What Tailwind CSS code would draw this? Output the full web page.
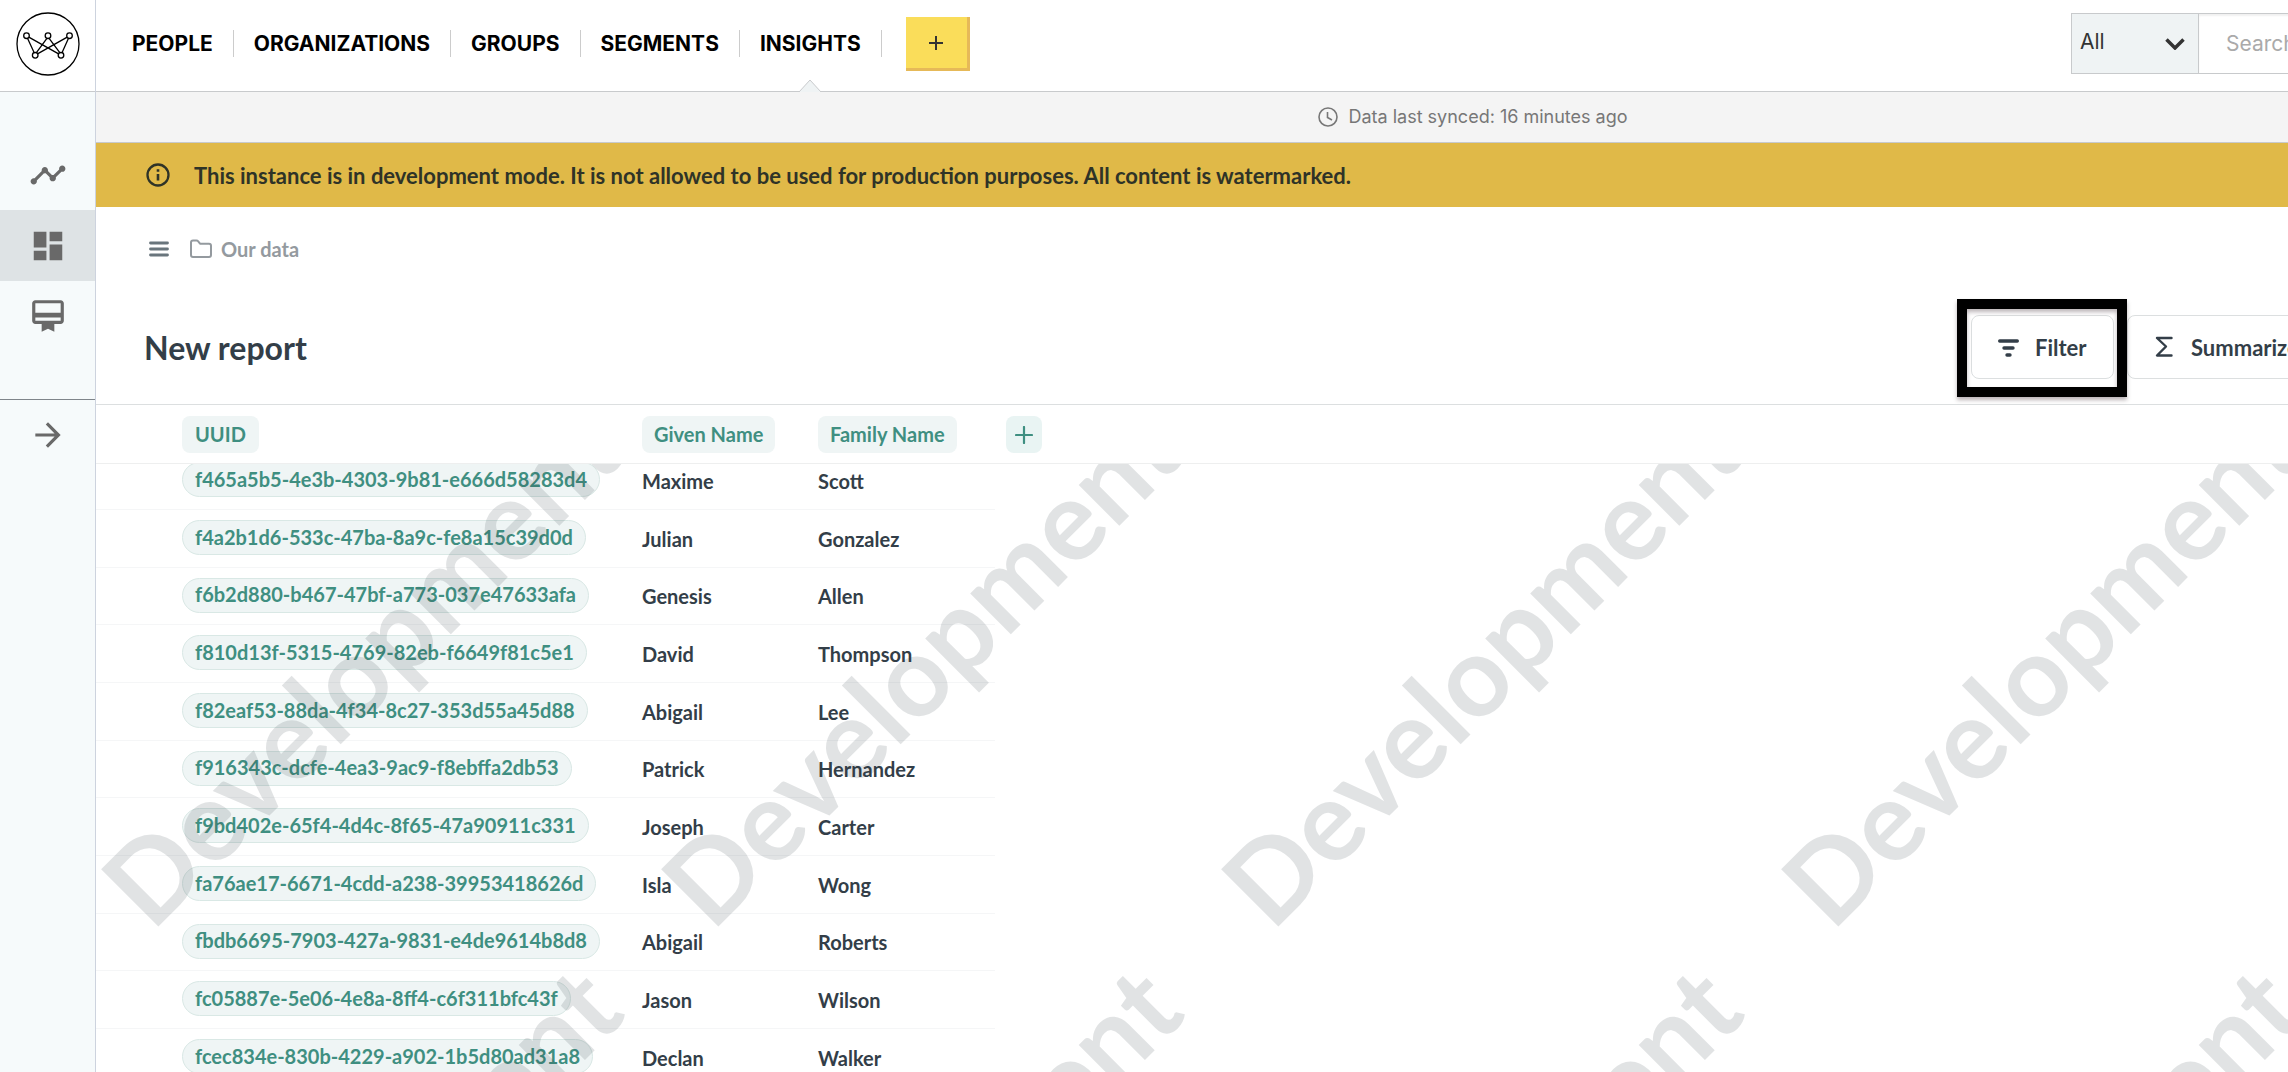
<!DOCTYPE html>
<html lang="en">
<head>
    <meta charset="UTF-8">
    <meta name="viewport" content="width=device-width, initial-scale=1.0">
    <title>New report - Insights</title>
    <script src="https://cdn.jsdelivr.net/npm/@tailwindcss/browser@4"></script>
</head>
<body class="flex h-screen overflow-hidden bg-white font-['Lato',sans-serif] text-[#333e48]">
    <!-- Sidebar -->
    <aside class="flex w-24 shrink-0 flex-col border-r border-[#cdd3de] bg-[#f6fafb] text-[#696969]">
        <a href="#" aria-label="Home" class="flex h-[92px] items-start justify-center border-b border-[#c8cacc] bg-white pt-3 text-black">
            <svg class="h-16 w-16" viewBox="0 0 64 64" fill="none" stroke="currentColor" stroke-width="1.3">
                <circle cx="32" cy="32" r="31"/>
                <path d="M11.5 26.3L18.2 40.8M12.8 25.1L42.6 41.9M30.9 26.3L20.4 40.7M33.1 26.3L43.8 40.7M52.5 26.3L46 40.8M51.2 25.1L21.5 41.9"/>
                <g fill="white">
                    <circle cx="10.5" cy="23.7" r="2.8"/>
                    <circle cx="32" cy="23.7" r="2.8"/>
                    <circle cx="53.5" cy="23.7" r="2.8"/>
                    <circle cx="19.2" cy="43.3" r="2.8"/>
                    <circle cx="45" cy="43.3" r="2.8"/>
                </g>
            </svg>
        </a>
        <nav class="flex flex-col border-b border-[#7f858a] pt-12 pb-12">
            <a href="#" aria-label="Activity" class="flex h-[70px] items-center justify-center">
                <svg class="h-[38px] w-[38px]" viewBox="0 0 24 24" fill="currentColor"><path d="M23 8c0 1.100-.9 2-2 2-.18 0-.35-.02-.51-.07l-3.560 3.550c.05.16.07.34.07.52 0 1.100-.9 2-2 2s-2-.9-2-2c0-.18.02-.36.07-.52l-2.550-2.550c-.16.05-.34.07-.52.07s-.36-.02-.52-.07l-4.550 4.560c.05.16.07.33.07.51 0 1.100-.9 2-2 2s-2-.9-2-2 .9-2 2-2c.18 0 .35.02.51.07l4.560-4.550C8.020 9.360 8 9.180 8 9c0-1.100.9-2 2-2s2 .9 2 2c0 .18-.02.36-.07.52l2.550 2.550c.16-.05.34-.07.52-.07s.36.02.52.07l3.550-3.560C19.020 8.350 19 8.180 19 8c0-1.100.9-2 2-2s2 .9 2 2z"/></svg>
            </a>
            <a href="#" aria-label="Dashboards" class="flex h-[71px] items-center justify-center bg-[#dee3e5]">
                <svg class="h-[38px] w-[38px]" viewBox="0 0 24 24" fill="currentColor"><path d="M3 13h8V3H3v10zm0 8h8v-6H3v6zm10 0h8V11h-8v10zm0-18v6h8V3h-8z"/></svg>
            </a>
            <a href="#" aria-label="Memberships" class="flex h-[70px] items-center justify-center">
                <svg class="h-[38px] w-[38px]" viewBox="0 0 24 24" fill="currentColor"><path d="M20 2H4c-1.110 0-2 .89-2 2v11c0 1.110.89 2 2 2h4v5l4-2 4 2v-5h4c1.110 0 2-.89 2-2V4c0-1.110-.89-2-2-2zm0 13H4v-2h16v2zm0-5H4V4h16v6z"/></svg>
            </a>
        </nav>
        <button type="button" aria-label="Expand menu" class="flex h-[70px] items-center justify-center">
            <svg class="h-[38px] w-[38px]" viewBox="0 0 24 24" fill="currentColor"><path d="M12 4l-1.410 1.410L16.170 11H4v2h12.170l-5.580 5.590L12 20l8-8z"/></svg>
        </button>
    </aside>

    <div class="min-w-0 flex-1 overflow-hidden">
        <div class="flex h-full w-[calc(100%+562px)] flex-col">
            <!-- Top navigation -->
            <header class="flex h-[92px] shrink-0 justify-between border-b border-[#c8cacc] font-['Inter',sans-serif]">
                <nav class="flex items-start pl-4 text-[21px] leading-[27px] font-bold text-black">
                    <a href="#" class="mt-[30px] border-r border-[#ccc] px-5">PEOPLE</a>
                    <a href="#" class="mt-[30px] border-r border-[#ccc] px-5">ORGANIZATIONS</a>
                    <a href="#" class="mt-[30px] border-r border-[#ccc] px-5">GROUPS</a>
                    <a href="#" class="mt-[30px] border-r border-[#ccc] px-5">SEGMENTS</a>
                    <a href="#" class="relative mt-[30px] border-r border-[#ccc] px-5">INSIGHTS
                        <svg class="absolute top-[49px] left-1/2 h-[13px] w-6 -translate-x-1/2" viewBox="0 0 24 13" fill="#eff3f4" stroke="#c8cacc"><path d="M1 13L12 1L23 13"/></svg>
                    </a>
                    <button type="button" aria-label="Add" class="mt-[17px] ml-6 flex h-[54px] w-16 items-center justify-center border-r-3 border-b-3 border-[#e6b958] bg-[#fadd5a] text-[#333]">
                        <svg class="h-[14px] w-[14px]" viewBox="0 0 14 14" stroke="currentColor" stroke-width="2"><path d="M7 0V14M0 7H14"/></svg>
                    </button>
                </nav>
                <form class="mt-[13px] flex h-[61px] w-[779px] text-[21px]">
                    <div class="relative w-32 shrink-0">
                        <select aria-label="Search in" class="h-full w-full appearance-none border border-[#c8cacc] bg-[#eff3f4] pr-10 pb-1 pl-2 text-[#333]">
                            <option>All</option>
                        </select>
                        <svg class="pointer-events-none absolute top-[25px] right-[14px] h-3 w-5" viewBox="0 0 20 12" fill="none" stroke="#333" stroke-width="3.500"><path d="M1.500 1.500L10 10L18.500 1.500"/></svg>
                    </div>
                    <input type="text" aria-label="Search" placeholder="Search" class="min-w-0 flex-1 border-y border-[#c8cacc] pl-[27px] shadow-[inset_0_2px_2px_rgba(0,0,0,0.06)] placeholder:text-[#aaa]">
                </form>
            </header>

            <div class="flex h-[51px] shrink-0 items-center justify-center gap-2.5 border-b border-[#c8cacc] bg-[#f4f4f4] font-['Inter',sans-serif] text-lg text-[#777]">
                <svg class="h-5 w-5" viewBox="0 0 20 20" fill="none" stroke="currentColor" stroke-width="1.600"><circle cx="10" cy="10" r="9"/><path d="M9.500 5V10.500L14 13"/></svg>
                <p>Data last synced: 16 minutes ago</p>
            </div>

            <div class="flex h-16 shrink-0 items-center gap-6 bg-[#e0b948] pl-[50px] text-[22px] font-bold text-[#2f3327]">
                <svg class="h-6 w-6" viewBox="0 0 24 24" fill="none" stroke="currentColor" stroke-width="2.300"><circle cx="12" cy="12" r="10.500"/><path d="M12 11V17.500M12 6.300V8.700" stroke-width="2.600"/></svg>
                <p>This instance is in development mode. It is not allowed to be used for production purposes. All content is watermarked.</p>
            </div>

            <!-- Breadcrumb -->
            <div class="flex h-[83px] shrink-0 items-center pl-[53px]">
                <button type="button" aria-label="Menu" class="mr-5 text-[#69757c]">
                    <svg class="h-5 w-5" viewBox="0 0 20 20" stroke="currentColor" stroke-width="2.800" stroke-linecap="round"><path d="M1.500 4H18.500M1.500 10H18.500M1.500 16H18.500"/></svg>
                </button>
                <a href="#" class="flex items-center gap-2 text-xl font-bold text-[#949a9f]">
                    <svg class="h-5 w-6" viewBox="0 0 24 20" fill="none" stroke="currentColor" stroke-width="2" stroke-linejoin="round"><path d="M2 3.500Q2 1.500 4 1.500H7.500Q8.500 1.500 9 2.200L11 4.700H20Q22 4.700 22 6.700V16Q22 18 20 18H4Q2 18 2 16Z"/></svg>
                    Our data
                </a>
            </div>

            <!-- Title and actions -->
            <div class="flex h-[115px] shrink-0 items-start justify-between border-b border-[#dcdfe0] pl-12">
                <h1 class="pt-9 text-[32px] leading-[44px] font-bold">New report</h1>
                <div class="flex w-[879px] gap-[13px] pt-[25px] text-[22px] font-bold">
                    <button type="button" class="relative flex h-16 w-[143px] items-center gap-[15px] rounded-lg border border-[#dcdfe0] pl-6">
                        <svg class="h-6 w-6" viewBox="0 0 24 24" stroke="currentColor" stroke-linecap="round" stroke-width="3.400"><path d="M3.700 6H21.300M8 13H17M11 20H14"/></svg>
                        Filter
                        <span class="absolute -top-[17px] -right-[14px] -bottom-[19px] -left-[15px] border-10 border-black shadow-[0_3px_4px_rgba(60,40,50,0.35),inset_0_3px_4px_rgba(60,40,50,0.35)]"></span>
                    </button>
                    <button type="button" class="flex h-16 items-center gap-[15px] rounded-lg border border-[#dcdfe0] px-6">
                        <svg class="h-6 w-6" viewBox="0 0 24 24" fill="none" stroke="currentColor" stroke-width="2.400" stroke-linecap="round" stroke-linejoin="round"><path d="M19.500 3H5L14 11.500L5 20.500H19.500"/></svg>
                        Summarize
                    </button>
                </div>
            </div>

            <!-- Report table -->
            <div class="relative min-h-0 flex-1">
                <div id="report" class="h-full overflow-hidden">
                    <table class="w-[957px] table-fixed border-separate border-spacing-0 text-left text-xl font-bold">
                        <thead>
                            <tr class="h-[59px]">
                                <td class="sticky top-0 w-[66px] bg-white"></td>
                                <th class="sticky top-0 w-[460px] bg-white pl-5"><span class="inline-block rounded-lg bg-[#eff5f5] px-[13px] leading-[37px] text-[#3f8f81]">UUID</span></th>
                                <th class="sticky top-0 w-[176px] bg-white pl-5"><span class="inline-block rounded-lg bg-[#eff5f5] px-3 leading-[37px] text-[#3f8f81]">Given Name</span></th>
                                <th class="sticky top-0 w-[197px] bg-white pl-5"><span class="inline-block rounded-lg bg-[#eff5f5] px-3 leading-[37px] text-[#3f8f81]">Family Name</span></th>
                                <td class="sticky top-0 w-[58px] bg-white pl-[11px]">
                                    <button type="button" aria-label="Add column" class="flex h-[37px] w-9 items-center justify-center rounded-lg bg-[#e9f4f3] text-[#3f8f81]">
                                        <svg class="h-[18px] w-[18px]" viewBox="0 0 18 18" stroke="currentColor" stroke-width="2.200" stroke-linecap="round"><path d="M9 1V17M1 9H17"/></svg>
                                    </button>
                                </td>
                            </tr>
                        </thead>
                        <tbody id="report-rows"></tbody>
                    </table>
                </div>
                <svg class="pointer-events-none absolute top-[58px] left-0 h-[calc(100%-58px)] w-full border-t border-[#eeefef]">
                    <defs>
                        <pattern id="watermark" y="-80" width="560" height="560" patternUnits="userSpaceOnUse">
                            <text transform="translate(56 549) rotate(-45)" class="fill-[#37404b]/15 text-[112px] font-bold">Development</text>
                        </pattern>
                    </defs>
                    <rect width="100%" height="100%" fill="url(#watermark)"/>
                </svg>
            </div>
        </div>
    </div>

    <script>
        const people = [
            ['f465a5b5-4e3b-4303-9b81-e666d58283d4', 'Maxime', 'Scott'],
            ['f4a2b1d6-533c-47ba-8a9c-fe8a15c39d0d', 'Julian', 'Gonzalez'],
            ['f6b2d880-b467-47bf-a773-037e47633afa', 'Genesis', 'Allen'],
            ['f810d13f-5315-4769-82eb-f6649f81c5e1', 'David', 'Thompson'],
            ['f82eaf53-88da-4f34-8c27-353d55a45d88', 'Abigail', 'Lee'],
            ['f916343c-dcfe-4ea3-9ac9-f8ebffa2db53', 'Patrick', 'Hernandez'],
            ['f9bd402e-65f4-4d4c-8f65-47a90911c331', 'Joseph', 'Carter'],
            ['fa76ae17-6671-4cdd-a238-39953418626d', 'Isla', 'Wong'],
            ['fbdb6695-7903-427a-9831-e4de9614b8d8', 'Abigail', 'Roberts'],
            ['fc05887e-5e06-4e8a-8ff4-c6f311bfc43f', 'Jason', 'Wilson'],
            ['fcec834e-830b-4229-a902-1b5d80ad31a8', 'Declan', 'Walker']
        ];

        // Render rows
        document.getElementById('report-rows').innerHTML = people.map(([uuid, given, family]) => `
            <tr class="h-[58px] nth-[3n]:h-[57px]">
                <td class="border-b border-[#f5f6f7]"></td>
                <td class="border-b border-[#f5f6f7] pb-0.5 pl-5"><a href="#" class="flex h-[35px] w-fit items-center rounded-full border border-[#d9e8e5] bg-[#eff5f5] px-3 pb-0.5 text-[#3f8f81]">${uuid}</a></td>
                <td class="border-b border-[#f5f6f7] pl-5">${given}</td>
                <td class="border-b border-[#f5f6f7] pl-5">${family}</td>
            </tr>
        `).join('');

        window.addEventListener('load', () => {
            document.getElementById('report').scrollTop = 12;
        });
    </script>
</body>
</html>
